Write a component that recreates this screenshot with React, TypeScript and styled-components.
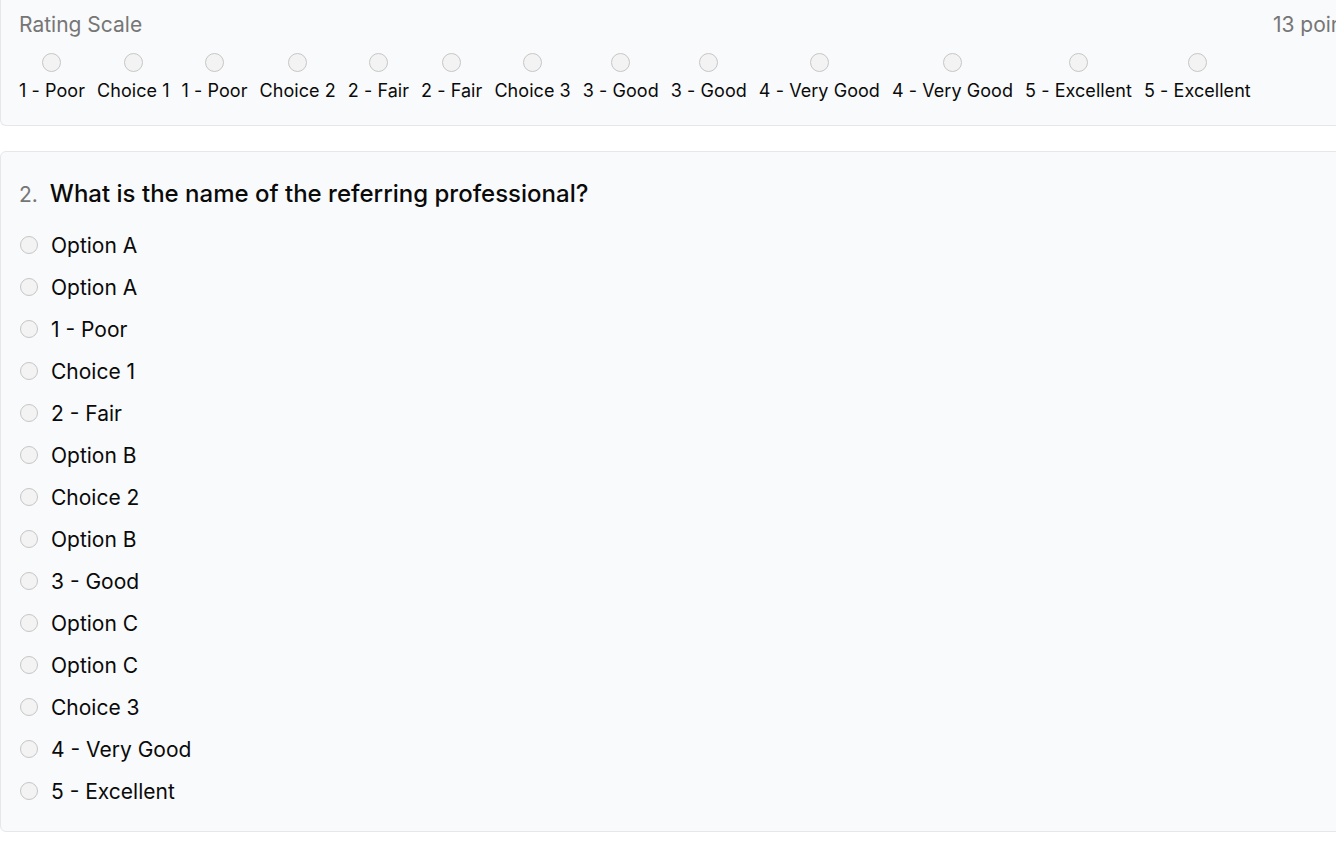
import { createGlobalStyle } from "styled-components";
import styled from "styled-components";

const GlobalStyle = createGlobalStyle`
  html, body {
    margin: 0;
    padding: 0;
    background: #ffffff;
    overflow-x: hidden;
    font-family: Inter, "Noto Sans", "Liberation Sans", sans-serif;
    color: #0a0a0a;
  }
`;

const Page = styled.div`
  display: flex;
  flex-direction: column;
  gap: 25px;
  width: 1380px;
  padding-bottom: 10px;
`;

const Card = styled.section<{ $clipped?: boolean }>`
  box-sizing: border-box;
  background: #f9fafb;
  border: 1px solid #e5e7eb;
  border-radius: 6px;
  ${({ $clipped }) => $clipped && `
    border-top: none;
    border-top-left-radius: 0;
    border-top-right-radius: 0;
  `}
`;

const ScaleCard = styled(Card)`
  padding: 13px 18px 24px;
`;

const ScaleHeader = styled.div`
  display: flex;
  justify-content: space-between;
  align-items: center;
  font-size: 21px;
  line-height: 24px;
  color: #767676;
`;

const ScaleRow = styled.div`
  display: flex;
  gap: 12px;
  margin-top: 16px;
`;

const ScaleItem = styled.label`
  display: flex;
  flex-direction: column;
  align-items: center;
  gap: 9px;
  font-size: 18px;
  line-height: 20px;
  letter-spacing: 0.06px;
  white-space: nowrap;
`;

const Radio = styled.span<{ $size: number }>`
  box-sizing: border-box;
  display: block;
  flex: none;
  width: ${({ $size }) => $size}px;
  height: ${({ $size }) => $size}px;
  border-radius: 50%;
  border: 1.5px solid #c6c6c6;
  background: #f3f3f3;
`;

const QuestionCard = styled(Card)`
  padding: 28px 18px 19px;
`;

const QuestionTitle = styled.div`
  display: flex;
  align-items: baseline;
  gap: 12px;
  margin-bottom: 16px;
`;

const QuestionNumber = styled.span`
  font-size: 21px;
  color: #767676;
`;

const QuestionText = styled.h2`
  margin: 0;
  font-size: 24px;
  line-height: 28px;
  font-weight: 500;
  color: #0a0a0a;
`;

const OptionList = styled.div`
  display: flex;
  flex-direction: column;
`;

const OptionRow = styled.label`
  display: flex;
  align-items: center;
  gap: 13px;
  height: 42px;
  font-size: 21px;
  padding-left: 1px;
`;

const scale = [
  "1 - Poor", "Choice 1", "1 - Poor", "Choice 2", "2 - Fair", "2 - Fair",
  "Choice 3", "3 - Good", "3 - Good", "4 - Very Good", "4 - Very Good",
  "5 - Excellent", "5 - Excellent",
];

const options = [
  "Option A", "Option A", "1 - Poor", "Choice 1", "2 - Fair", "Option B",
  "Choice 2", "Option B", "3 - Good", "Option C", "Option C", "Choice 3",
  "4 - Very Good", "5 - Excellent",
];

export default function App() {
  return (
    <>
      <GlobalStyle />
      <Page>
        <ScaleCard $clipped>
          <ScaleHeader>
            <span>Rating Scale</span>
            <span>13 points</span>
          </ScaleHeader>
          <ScaleRow>
            {scale.map((label, i) => (
              <ScaleItem key={i}>
                <Radio $size={19} />
                {label}
              </ScaleItem>
            ))}
          </ScaleRow>
        </ScaleCard>

        <QuestionCard>
          <QuestionTitle>
            <QuestionNumber>2.</QuestionNumber>
            <QuestionText>What is the name of the referring professional?</QuestionText>
          </QuestionTitle>
          <OptionList>
            {options.map((label, i) => (
              <OptionRow key={i}>
                <Radio $size={18} />
                {label}
              </OptionRow>
            ))}
          </OptionList>
        </QuestionCard>
      </Page>
    </>
  );
}
